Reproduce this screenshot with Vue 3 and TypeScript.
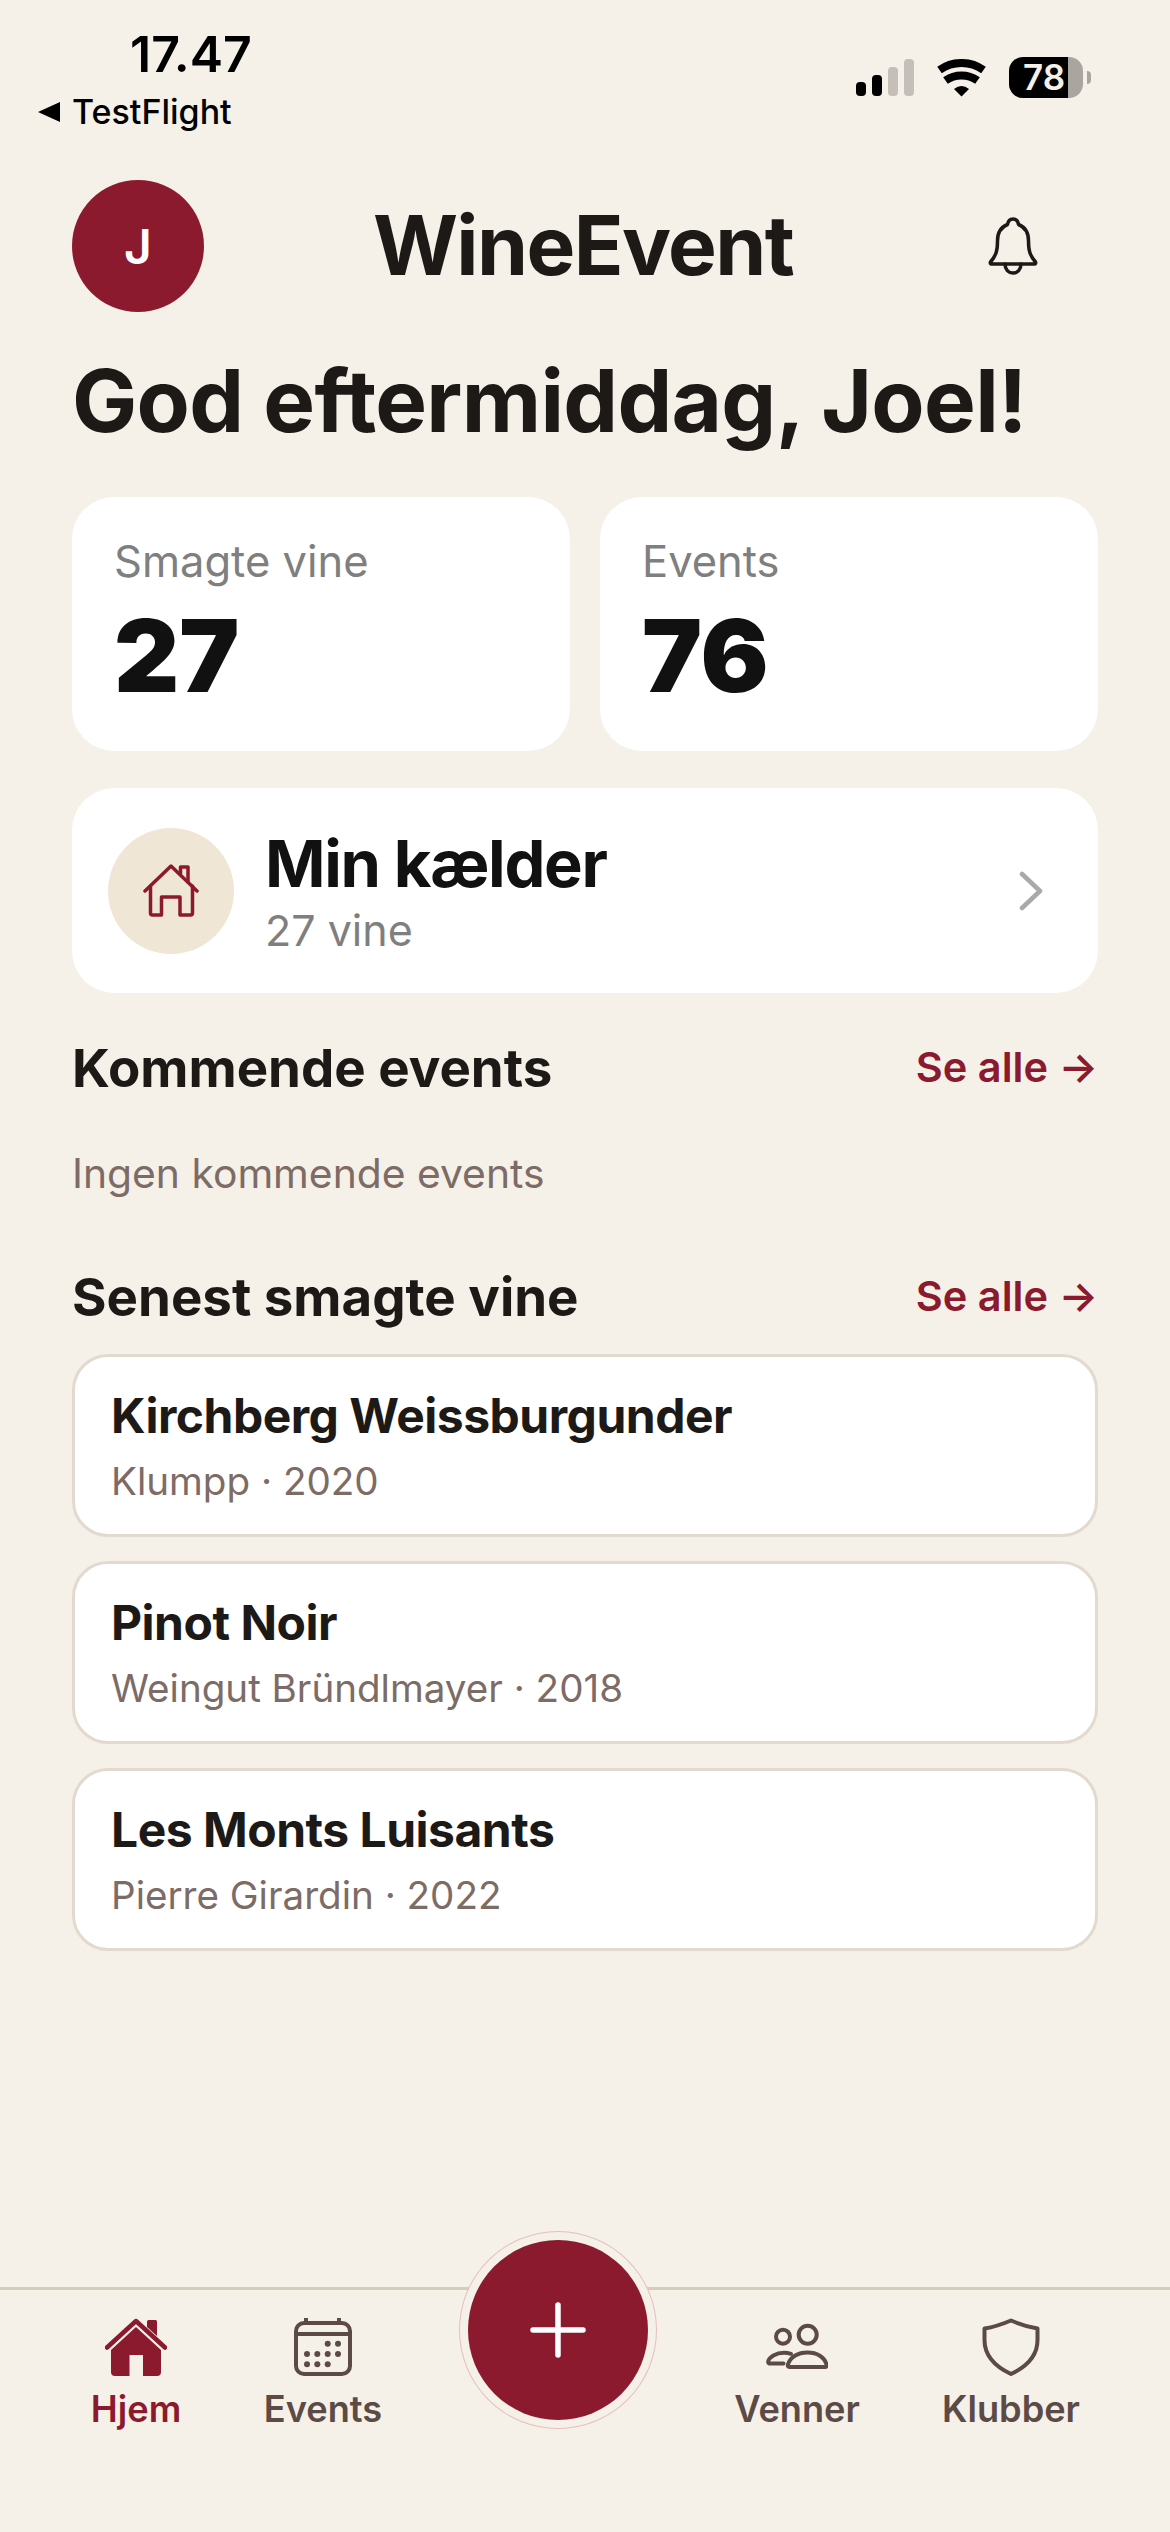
<script setup lang="ts">
interface Wine {
  name: string
  meta: string
}

const wines: Wine[] = [
  { name: 'Kirchberg Weissburgunder', meta: 'Klumpp · 2020' },
  { name: 'Pinot Noir', meta: 'Weingut Bründlmayer · 2018' },
  { name: 'Les Monts Luisants', meta: 'Pierre Girardin · 2022' },
]

const calendarDots = [
  [33.7, 25.7], [44, 25.7],
  [13, 36], [23.3, 36], [33.7, 36], [44, 36],
  [13, 46.3], [23.3, 46.3], [33.7, 46.3],
]
</script>

<template>
  <div class="screen">
    <div class="status-bar">
      <div class="status-left">
        <div class="time">17.47</div>
        <div class="back-link"><span class="back-arrow"></span>TestFlight</div>
      </div>
      <div class="status-right">
        <svg width="58" height="37" viewBox="0 0 58 37">
          <rect x="0" y="23" width="10" height="14" rx="4" fill="#000" />
          <rect x="16" y="16" width="10" height="21" rx="4" fill="#000" />
          <rect x="32" y="8" width="10" height="29" rx="4" fill="#c4c0b9" />
          <rect x="48" y="0" width="10" height="37" rx="4" fill="#c4c0b9" />
        </svg>
        <svg class="wifi" width="51" height="38" viewBox="0 0 51 38">
          <path d="M3.5 11 A38 38 0 0 1 47.5 11" fill="none" stroke="#000" stroke-width="8" />
          <path d="M9.5 21.5 A28 28 0 0 1 41.5 21.5" fill="none" stroke="#000" stroke-width="8" />
          <path d="M18 30 Q25.5 24 33 30 L25.5 37.5 Z" fill="#000" />
        </svg>
        <div class="battery"><span>78</span></div>
        <span class="battery-nub"></span>
      </div>
    </div>

    <header class="app-header">
      <div class="avatar">J</div>
      <h1 class="app-title">WineEvent</h1>
      <svg class="bell" width="50" height="58" viewBox="0 0 50 58" fill="none" stroke="#1c1917" stroke-width="3.5" stroke-linejoin="round" stroke-linecap="round">
        <path d="M25 2 C21.5 2 20 4.5 19.5 7.5 C13 10 9.5 16 9.5 24 C9.5 33 8.5 38 2.5 45 C2 46 2.5 47 3.5 47 H46.5 C47.5 47 48 46 47.5 45 C41.5 38 40.5 33 40.5 24 C40.5 16 37 10 30.5 7.5 C30 4.5 28.5 2 25 2 Z" />
        <path d="M17 47 C17 52.5 20.5 56 25 56 C29.5 56 33 52.5 33 47" />
      </svg>
    </header>

    <main class="content">
      <h2 class="greeting">God eftermiddag, Joel!</h2>

      <section class="stats">
        <div class="stat-card">
          <div class="stat-label">Smagte vine</div>
          <div class="stat-value">27</div>
        </div>
        <div class="stat-card">
          <div class="stat-label">Events</div>
          <div class="stat-value">76</div>
        </div>
      </section>

      <section class="cellar-card">
        <div class="cellar-icon">
          <svg width="56" height="53" viewBox="0 0 56 53" fill="none" stroke="#8b1a2e" stroke-width="3.5" stroke-linecap="round" stroke-linejoin="round">
            <path d="M2 27 L28 2 L54 27" />
            <path d="M37.5 10 V3 H45 V18" />
            <path d="M7.5 22 V49 a2 2 0 0 0 2 2 H18.5 V33 H37 V51 H47.5 a2 2 0 0 0 2-2 V22" />
          </svg>
        </div>
        <div class="cellar-text">
          <div class="cellar-title">Min kælder</div>
          <div class="cellar-sub">27 vine</div>
        </div>
        <svg class="chevron" width="24" height="40" viewBox="0 0 24 40" fill="none" stroke="#a9a9a9" stroke-width="4.5" stroke-linecap="round" stroke-linejoin="round">
          <path d="M3 3 L21 20 L3 37" />
        </svg>
      </section>

      <div class="section-head first">
        <h3>Kommende events</h3>
        <span class="see-all">Se alle →</span>
      </div>
      <p class="empty">Ingen kommende events</p>

      <div class="section-head second">
        <h3>Senest smagte vine</h3>
        <span class="see-all">Se alle →</span>
      </div>
      <div class="wine-list">
        <div v-for="wine in wines" :key="wine.name" class="wine-card">
          <div class="wine-name">{{ wine.name }}</div>
          <div class="wine-meta">{{ wine.meta }}</div>
        </div>
      </div>
    </main>

    <nav class="tab-bar">
      <div class="tab active">
        <svg width="62" height="58" viewBox="0 0 62 58">
          <path d="M31 9 L56 32 V54 a4 4 0 0 1-4 4 H38 V37 H24.5 V58 H10 a4 4 0 0 1-4-4 V32 Z" fill="#8b1a2e" />
          <path d="M2 29.5 L31 3 L60 29.5" fill="none" stroke="#8b1a2e" stroke-width="4.5" stroke-linecap="round" stroke-linejoin="round" />
          <path d="M42 9 V3.5 a1.5 1.5 0 0 1 1.5-1.5 H50.5 a1.5 1.5 0 0 1 1.5 1.5 V18 Z" fill="#8b1a2e" />
        </svg>
        <span>Hjem</span>
      </div>
      <div class="tab">
        <svg width="58" height="58" viewBox="0 0 58 58" fill="none" stroke="#5c4a47" stroke-width="4">
          <rect x="2" y="5" width="54" height="51" rx="8" />
          <path d="M2 16 H56" />
          <path d="M12 0.5 V5 M45 0.5 V5" stroke-linecap="round" />
          <circle v-for="(dot, i) in calendarDots" :key="i" :cx="dot[0]" :cy="dot[1]" r="3" fill="#5c4a47" stroke="none" />
        </svg>
        <span>Events</span>
      </div>
      <div class="tab-spacer"></div>
      <div class="tab">
        <svg class="friends" width="62" height="46" viewBox="0 0 62 46" fill="none" stroke="#5c4a47" stroke-width="4" stroke-linecap="round" stroke-linejoin="round">
          <circle cx="41.7" cy="10.7" r="9" />
          <circle cx="17" cy="12.7" r="7" />
          <path d="M23.5 43 C22 43 21.5 42 22 40.5 C24 33 32 28.5 41.5 28.5 C51 28.5 58.5 33 60.5 40.5 C61 42 60.5 43 59 43 Z" />
          <path d="M25 29.8 C22.5 29 20.5 28.7 18 28.7 C10 28.7 3 33 2.2 37.5 C2 39 3 39.6 4.5 39.6 H17.5" />
        </svg>
        <span>Venner</span>
      </div>
      <div class="tab">
        <svg width="58" height="58" viewBox="0 0 58 58" fill="none" stroke="#5c4a47" stroke-width="4" stroke-linejoin="round">
          <path d="M29 2.5 C22 5.5 12 9 2.5 10.5 V22 C2.5 38 14 49 29 56 C44 49 55.5 38 55.5 22 V10.5 C46 9 36 5.5 29 2.5 Z" />
        </svg>
        <span>Klubber</span>
      </div>
      <button class="fab" type="button" aria-label="Tilføj">
        <svg width="56" height="56" viewBox="0 0 56 56" stroke="#fff" stroke-width="5.5" stroke-linecap="round">
          <path d="M28 3 V53 M3 28 H53" />
        </svg>
      </button>
    </nav>
  </div>
</template>

<style>
html,
body {
  background: #f5f0e8;
}
</style>

<style scoped>
.screen {
  position: relative;
  display: flex;
  flex-direction: column;
  width: 1170px;
  height: 2532px;
  overflow: hidden;
  background: #f5f0e8;
  color: #1c1917;
  font-family: Inter, "Liberation Sans", sans-serif;
}

/* status bar */
.status-bar {
  display: flex;
  justify-content: space-between;
  height: 180px;
  flex-shrink: 0;
}

.status-left {
  padding: 29px 0 0 38px;
}

.time {
  margin-left: 92px;
  font-size: 50px;
  line-height: 50px;
  font-weight: 600;
  color: #000;
}

.back-link {
  display: flex;
  align-items: center;
  gap: 12px;
  margin-top: 13px;
  font-size: 34px;
  line-height: 40px;
  font-weight: 500;
  color: #000;
}

.back-arrow {
  width: 0;
  height: 0;
  border-top: 10px solid transparent;
  border-bottom: 10px solid transparent;
  border-right: 22px solid #000;
}

.status-right {
  display: flex;
  align-items: flex-start;
  padding: 59px 79px 0 0;
}

.wifi {
  margin-left: 22px;
}

.battery {
  width: 74px;
  height: 41px;
  margin: -2px 0 0 22px;
  padding-left: 14px;
  box-sizing: border-box;
  border-radius: 14px;
  background: linear-gradient(90deg, #000 0 80%, #aaa69f 80% 100%);
  color: #f5f0e8;
  font-size: 35px;
  line-height: 41px;
  font-weight: 600;
}

.battery-nub {
  width: 4px;
  height: 13px;
  margin: 12px 0 0 4px;
  border-radius: 0 4px 4px 0;
  background: #aaa69f;
}

/* header */
.app-header {
  display: grid;
  grid-template-columns: 132px 1fr 132px;
  align-items: center;
  padding: 0 72px;
  flex-shrink: 0;
}

.avatar {
  display: flex;
  align-items: center;
  justify-content: center;
  width: 132px;
  height: 132px;
  border-radius: 50%;
  background: #8b1a2e;
  color: #fff;
  font-size: 48px;
  font-weight: 600;
}

.app-title {
  margin: 0;
  padding-right: 4px;
  text-align: center;
  font-size: 82px;
  line-height: 100px;
  font-weight: 700;
  letter-spacing: -1.6px;
}

.bell {
  justify-self: end;
  margin-right: 60px;
}

/* content */
.content {
  padding: 0 72px;
  flex: 1;
}

.greeting {
  margin: 37px 0 0;
  font-size: 87px;
  line-height: 104px;
  font-weight: 700;
  letter-spacing: -0.7px;
  white-space: nowrap;
}

.stats {
  display: grid;
  grid-template-columns: 498px 498px;
  gap: 30px;
  margin-top: 44px;
}

.stat-card {
  height: 254px;
  box-sizing: border-box;
  padding: 39px 42px 0;
  border-radius: 42px;
  background: #fff;
}

.stat-label {
  font-size: 43.5px;
  line-height: 50px;
  color: #7f7f7f;
}

.stat-value {
  margin-top: 14px;
  font-size: 101px;
  line-height: 110px;
  font-weight: 900;
  color: #111;
}

.cellar-card {
  display: flex;
  align-items: center;
  height: 205px;
  margin-top: 37px;
  padding: 0 55px 0 36px;
  box-sizing: border-box;
  border-radius: 42px;
  background: #fff;
}

.cellar-icon {
  display: flex;
  align-items: center;
  justify-content: center;
  width: 126px;
  height: 126px;
  border-radius: 50%;
  background: #f0e6d6;
}

.cellar-text {
  flex: 1;
  margin-left: 31px;
  padding-top: 2px;
}

.cellar-title {
  font-size: 65px;
  line-height: 70px;
  font-weight: 700;
  letter-spacing: -1.3px;
  color: #111;
}

.cellar-sub {
  margin-top: 6px;
  font-size: 43px;
  line-height: 50px;
  color: #7f7f7f;
}

.section-head {
  display: flex;
  align-items: center;
  justify-content: space-between;
}

.section-head.first {
  margin-top: 45px;
}

.section-head.second {
  margin-top: 69px;
}

.section-head h3 {
  margin: 0;
  font-size: 52.8px;
  line-height: 60px;
  font-weight: 700;
}

.see-all {
  margin-top: -2px;
  font-size: 41.5px;
  font-weight: 600;
  color: #8b1a2e;
}

.empty {
  margin: 50px 0 0;
  font-size: 40.8px;
  line-height: 50px;
  color: #7d6b66;
}

.wine-list {
  display: flex;
  flex-direction: column;
  gap: 24px;
  margin-top: 27px;
}

.wine-card {
  height: 183px;
  box-sizing: border-box;
  padding: 29px 36px 0;
  border: 3px solid #e2dace;
  border-radius: 36px;
  background: #fff;
}

.wine-name {
  font-size: 48px;
  line-height: 60px;
  font-weight: 700;
  letter-spacing: -0.5px;
}

.wine-meta {
  margin-top: 10px;
  font-size: 38.6px;
  line-height: 50px;
  color: #7d6b66;
}

/* tab bar */
.tab-bar {
  position: relative;
  display: grid;
  grid-template-columns: 198px 176px 296px 180px 248px;
  align-items: start;
  height: 245px;
  flex-shrink: 0;
  padding: 28px 0 0 37px;
  box-sizing: border-box;
  border-top: 3px solid #d6ccbc;
}

.tab {
  display: flex;
  flex-direction: column;
  align-items: center;
  height: 120px;
  font-size: 36.2px;
  font-weight: 600;
  color: #5c4a47;
}

.tab svg {
  height: 58px;
  flex-shrink: 0;
}

.tab span {
  margin-top: 11px;
  line-height: 44px;
}

.tab.active {
  color: #8b1a2e;
}

.fab {
  position: absolute;
  top: -50px;
  left: 468px;
  display: flex;
  align-items: center;
  justify-content: center;
  width: 180px;
  height: 180px;
  padding: 0;
  border: 0;
  border-radius: 50%;
  background: #8b1a2e;
  box-shadow: 0 0 0 8px #f5f0e8, 0 0 0 9px #e4bfc0;
}
</style>
